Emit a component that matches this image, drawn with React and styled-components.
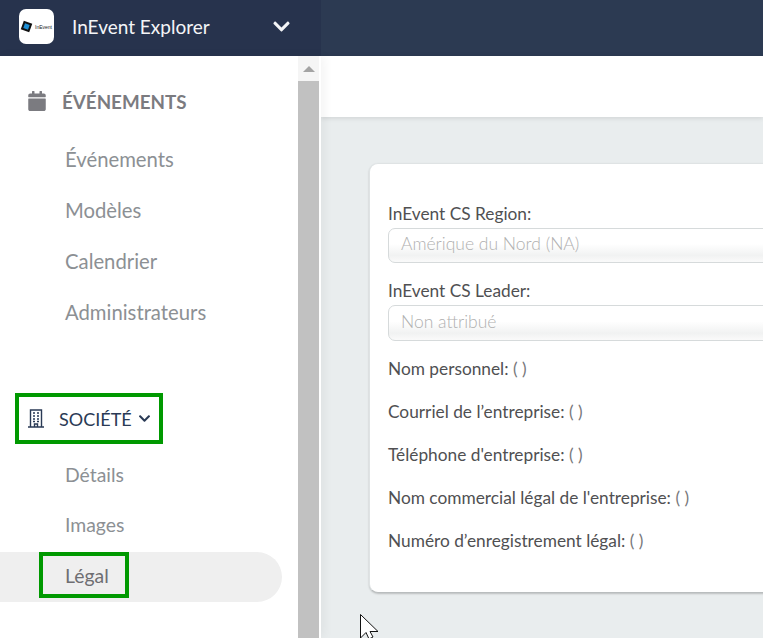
import React from 'react';
import styled, { createGlobalStyle } from 'styled-components';
import { FaCalendar, FaChevronDown } from 'react-icons/fa';

const GlobalStyle = createGlobalStyle`
  html, body { margin: 0; padding: 0; height: 100%; overflow: hidden; }
  body { font-family: 'Lato', sans-serif; background: #e9edee; }
`;

const Page = styled.div`
  position: relative;
  width: 763px;
  height: 638px;
  overflow: hidden;
  display: flex;
  flex-direction: column;
`;

const TopBar = styled.header`
  height: 56px;
  flex: none;
  display: flex;
  background: #2c3a52;
`;

const Brand = styled.div`
  width: 321px;
  display: flex;
  align-items: center;
  padding: 0 30px 3px 19px;
  box-sizing: border-box;
  background: #27334d;
  color: #f4f5f7;
`;

const LogoBox = styled.div`
  width: 35px;
  height: 35px;
  border-radius: 7px;
  background: #fff;
  display: flex;
  align-items: center;
  justify-content: center;
  flex: none;
`;

const BrandName = styled.span`
  font-size: 19px;
  margin-left: 18px;
  flex: 1;
`;

const Body = styled.div`
  flex: 1;
  display: flex;
  min-height: 0;
`;

const Sidebar = styled.aside`
  position: relative;
  width: 321px;
  flex: none;
  display: flex;
  background: #fff;
  box-shadow: 3px 0 10px rgba(0, 0, 0, 0.05);
`;

const Menu = styled.nav`
  width: 298px;
  flex: none;
  padding-top: 21px;
  box-sizing: border-box;
`;

const Scrollbar = styled.div`
  width: 21px;
  flex: none;
  margin-right: 2px;
  background: #f5f5f5;
  display: flex;
  flex-direction: column;
`;

const ScrollArrow = styled.div`
  height: 25px;
  display: flex;
  align-items: center;
  justify-content: center;
  &::before {
    content: '';
    border-left: 6px solid transparent;
    border-right: 6px solid transparent;
    border-bottom: 6px solid #a3a3a3;
  }
`;

const ScrollThumb = styled.div`
  flex: 1;
  background: #c1c1c1;
`;

const SectionTitle = styled.div`
  display: flex;
  align-items: center;
  height: 48px;
  padding-left: 28px;
  font-size: 18.8px;
  font-weight: 700;
  color: #7b7b80;
  gap: 16px;
  & > svg { margin-left: -1px; margin-right: -1px; }
`;

const MenuItem = styled.div`
  height: 51px;
  line-height: 51px;
  padding-left: 65px;
  font-size: 20.3px;
  color: #8c9094;
`;

const ItemList = styled.div`
  margin-top: 9px;
`;

const CompanyWrap = styled.div`
  margin-top: 55px;
  margin-left: 15px;
  width: 148px;
  height: 51px;
  border: 4px solid #009900;
  box-sizing: border-box;
  display: flex;
  align-items: center;
  padding-left: 9px;
  color: #2a3a55;
  font-size: 18px;
`;

const CompanyLabel = styled.span`
  margin: 0 6px 0 15px;
`;

const CompanyList = styled.div`
  margin-top: 6px;
`;

const SubItem = styled.div`
  height: 50px;
  line-height: 50px;
  padding-left: 65px;
  font-size: 19.4px;
  color: #8c9094;
`;

const ActiveItem = styled.div`
  width: 282px;
  height: 50px;
  margin-top: 2px;
  background: #efefef;
  border-radius: 0 25px 25px 0;
  padding-left: 39px;
  box-sizing: border-box;
`;

const Highlight = styled.div`
  width: 90px;
  height: 46px;
  border: 4px solid #009900;
  box-sizing: border-box;
  padding-left: 22px;
  line-height: 40px;
  font-size: 19.4px;
  color: #6e6e72;
`;

const Main = styled.main`
  flex: 1;
  min-width: 0;
  display: flex;
  flex-direction: column;
  background: #e9edee;
`;

const SubHeader = styled.div`
  height: 61px;
  flex: none;
  background: #fff;
  box-shadow: 0 1px 5px rgba(0, 0, 0, 0.12);
`;

const Card = styled.section`
  margin: 46px 0 0 48px;
  width: 460px;
  height: 430px;
  box-sizing: border-box;
  padding: 40px 0 0 18px;
  background: #fff;
  border-radius: 9px;
  border: 1px solid #dfe3e4;
  border-bottom: 1px solid #b9bdbe;
  box-shadow: 0 1px 2px rgba(0, 0, 0, 0.2);
  color: #505052;
  font-size: 17.3px;
`;

const FieldLabel = styled.div`
  height: 20px;
  line-height: 20px;
`;

const Select = styled.div`
  height: ${p => (p.$tall ? 36 : 35)}px;
  margin: 4px 0 18px;
  border: 1px solid #d6dadb;
  border-radius: 7px;
  box-sizing: border-box;
  padding-left: 12px;
  line-height: ${p => (p.$tall ? 32 : 30)}px;
  font-size: 17.5px;
  font-weight: 300;
  color: #b0b0b0;
  background: linear-gradient(#fff 45%, #f1f2f2 80%, #fafafa);
`;

const InfoRow = styled.div`
  height: 43px;
  line-height: 20px;
  & > span { color: #77777a; }
`;

const Cursor = styled.svg`
  position: absolute;
  left: 360px;
  top: 614px;
`;

const infoRows = [
  'Nom personnel:',
  'Courriel de l’entreprise:',
  "Téléphone d'entreprise:",
  "Nom commercial légal de l'entreprise:",
  'Numéro d’enregistrement légal:',
];

const BuildingIcon = () => (
  <svg width="16" height="19" viewBox="0 0 16 19" fill="none" stroke="#2a3a55" strokeWidth="1.4">
    <path d="M2.5 18V1h11v17M0 18h16" />
    <path d="M6.5 18v-3h3v3" />
    <path d="M5 4h2M9 4h2M5 7h2M9 7h2M5 10h2M9 10h2M5 12.5h2M9 12.5h2" strokeWidth="1.7" />
  </svg>
);

const Logo = () => (
  <svg width="33" height="14" viewBox="0 0 33 14">
    <rect x="2" y="2" width="9" height="9" fill="#111" transform="rotate(20 6.5 6.5)" />
    <rect x="4" y="4" width="5" height="5" fill="#1d8fd6" transform="rotate(20 6.5 6.5)" />
    <text x="15" y="9" fontSize="5" fontFamily="Liberation Sans, sans-serif" fill="#222">InEvent</text>
  </svg>
);

const App = () => (
  <Page>
    <GlobalStyle />
    <TopBar>
      <Brand>
        <LogoBox><Logo /></LogoBox>
        <BrandName>InEvent Explorer</BrandName>
        <FaChevronDown size={19} />
      </Brand>
    </TopBar>
    <Body>
      <Sidebar>
        <Menu>
          <SectionTitle>
            <FaCalendar size={20} />
            ÉVÉNEMENTS
          </SectionTitle>
          <ItemList>
            <MenuItem>Événements</MenuItem>
            <MenuItem>Modèles</MenuItem>
            <MenuItem>Calendrier</MenuItem>
            <MenuItem>Administrateurs</MenuItem>
          </ItemList>
          <CompanyWrap>
            <BuildingIcon />
            <CompanyLabel>SOCIÉTÉ</CompanyLabel>
            <FaChevronDown size={13} />
          </CompanyWrap>
          <CompanyList>
            <SubItem>Détails</SubItem>
            <SubItem>Images</SubItem>
            <ActiveItem><Highlight>Légal</Highlight></ActiveItem>
          </CompanyList>
        </Menu>
        <Scrollbar>
          <ScrollArrow />
          <ScrollThumb />
        </Scrollbar>
      </Sidebar>
      <Main>
        <SubHeader />
        <Card>
          <FieldLabel>InEvent CS Region:</FieldLabel>
          <Select>Amérique du Nord (NA)</Select>
          <FieldLabel>InEvent CS Leader:</FieldLabel>
          <Select $tall>Non attribué</Select>
          {infoRows.map(label => (
            <InfoRow key={label}>{label} <span>( )</span></InfoRow>
          ))}
        </Card>
      </Main>
    </Body>
    <Cursor width="20" height="26" viewBox="0 0 20 26">
      <path d="M0.5 0.5V24L6 18.5L9 25L13 23L10 17.5H18Z" fill="#fff" stroke="#111" strokeWidth="1" />
    </Cursor>
  </Page>
);

export default App;
